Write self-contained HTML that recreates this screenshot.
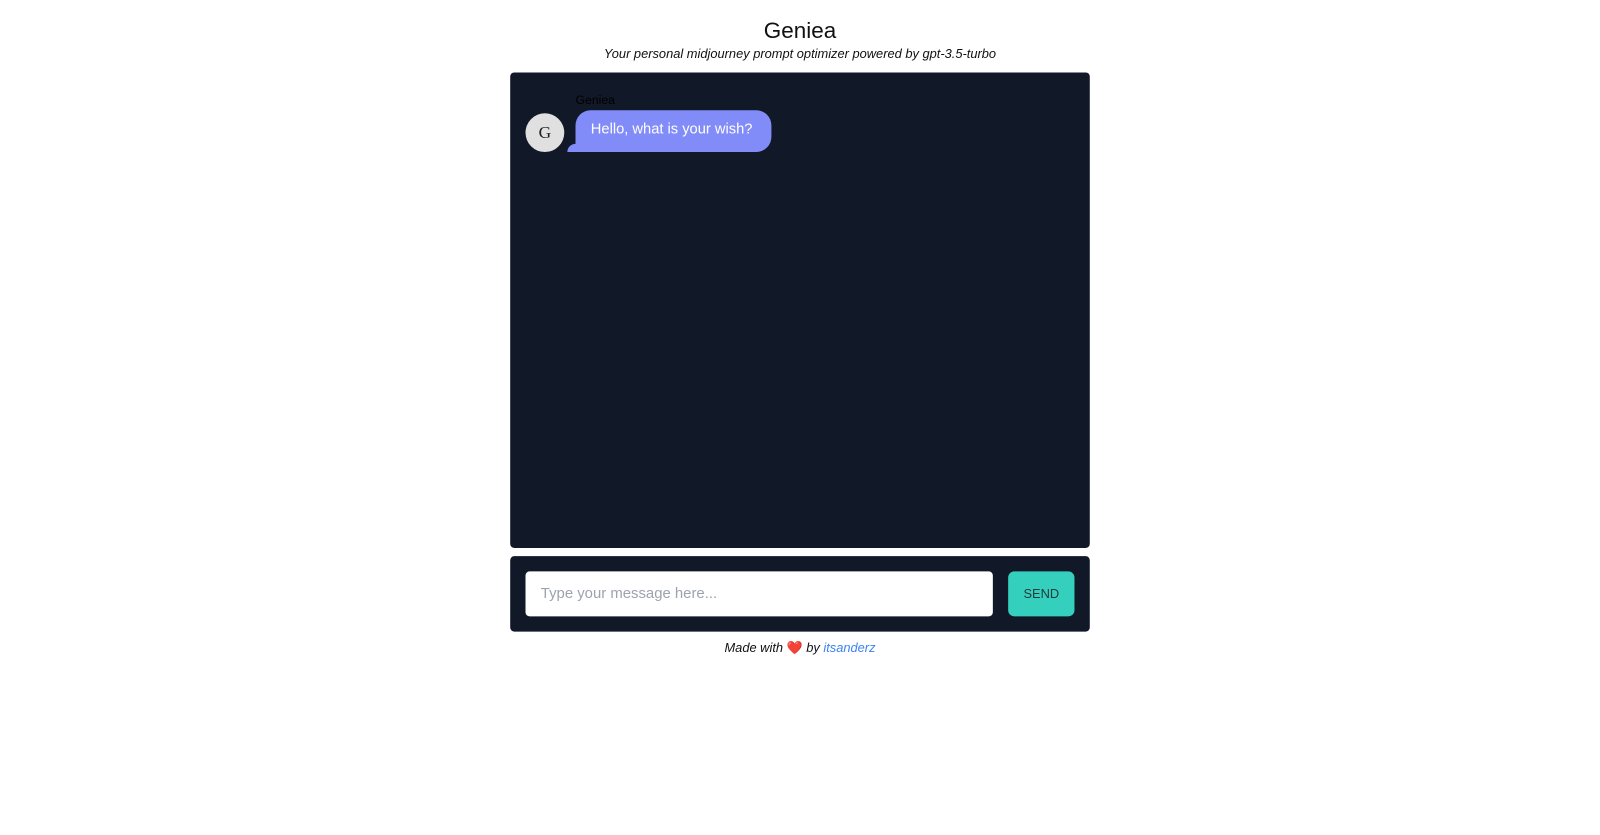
<!DOCTYPE html>
<html><head><style>
body{margin:0;background:#fff;font-family:"Liberation Sans",sans-serif;width:1600px;height:834px;position:relative;overflow:hidden}
#w{position:absolute;left:0;top:0;width:1568px;height:818px;transform:scale(1.0204);transform-origin:0 0}
.t{position:absolute;left:0;width:1568px;text-align:center}
</style></head><body><div id="w">
<div class="t" style="top:17px;font-size:22px;color:#111">Geniea</div>
<div class="t" style="top:46px;font-size:12.6px;font-style:italic;color:#111">Your personal midjourney prompt optimizer powered by gpt-3.5-turbo</div>
<div style="position:absolute;left:500px;top:71px;width:568px;height:466px;background:#111827;border-radius:4px"></div>
<div style="position:absolute;left:564px;top:91px;font-size:12px;color:#000">Geniea</div>
<div style="position:absolute;left:515px;top:111px;width:38px;height:38px;border-radius:50%;background:#e0e0e0;color:#222;font-family:'Liberation Serif',serif;font-size:17px;text-align:center;line-height:38px">G</div>
<div style="position:absolute;left:556px;top:141px;width:12px;height:8px;background:#818cf8;border-radius:8px 0 0 0/8px 0 0 0"></div>
<div style="position:absolute;left:564px;top:108px;width:192px;height:41px;background:#818cf8;border-radius:15px 15px 15px 0;color:#fff;font-size:14.4px;line-height:38px;box-sizing:border-box;padding-left:15px">Hello, what is your wish?</div>
<div style="position:absolute;left:500px;top:545px;width:568px;height:74px;background:#111827;border-radius:4px"></div>
<div style="position:absolute;left:515px;top:560px;width:458px;height:44px;background:#fff;border-radius:4px;color:#9ca3af;font-size:14.6px;line-height:44px;box-sizing:border-box;padding-left:15px">Type your message here...</div>
<div style="position:absolute;left:988px;top:560px;width:65px;height:44px;background:#34d0bd;border-radius:6px;color:#1f3a3a;font-size:12.6px;line-height:44px;text-align:center">SEND</div>
<div class="t" style="top:628px;font-size:12.6px;font-style:italic;color:#111">Made with <span style="color:#e03131;font-style:normal">❤️</span> by <span style="color:#3b82f6">itsanderz</span></div>
</div></body></html>
